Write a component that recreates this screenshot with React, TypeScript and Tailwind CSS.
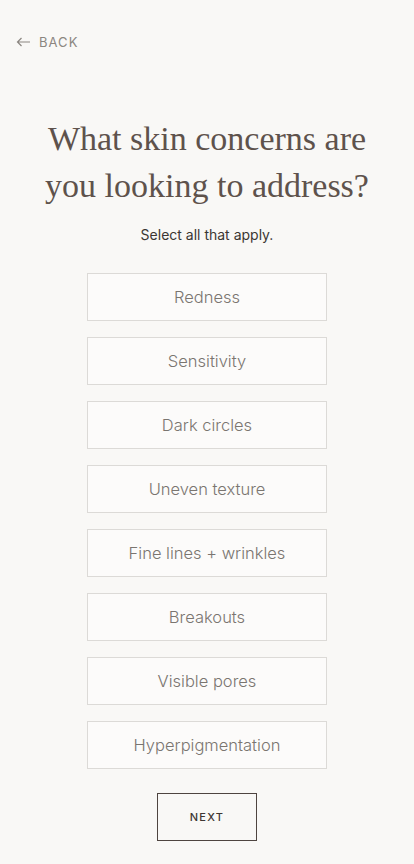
import React from "react";

const options = [
  "Redness",
  "Sensitivity",
  "Dark circles",
  "Uneven texture",
  "Fine lines + wrinkles",
  "Breakouts",
  "Visible pores",
  "Hyperpigmentation",
];

export default function App() {
  return (
    <div className="min-h-[864px] w-full bg-[#f9f8f6] font-['Inter',sans-serif]">
      <div className="flex items-center gap-[8px] pl-[16px] pt-[34px] text-[#8b8680]">
        <svg width="15" height="10" viewBox="0 0 15 10" fill="none" stroke="currentColor" strokeWidth="1.2">
          <path d="M14 5H1.5M5.5 1L1.5 5l4 4" />
        </svg>
        <span className="text-[13px] leading-[16px] tracking-[0.08em]">BACK</span>
      </div>
      <h1 className="mt-[65px] text-center font-['Liberation_Serif',serif] text-[34px] leading-[47px] text-[#5e524c]">
        What skin concerns are
        <br />
        you looking to address?
      </h1>
      <p className="mt-[16px] text-center text-[14px] leading-[20px] text-[#3b3633]">Select all that apply.</p>
      <div className="mt-[28px] flex flex-col items-center gap-[16px]">
        {options.map((o) => (
          <button
            key={o}
            className="flex h-[48px] w-[240px] items-center justify-center border border-[#dcdad7] bg-[#fcfbfa] text-[16.5px] font-light text-[#7a7570]"
          >
            {o}
          </button>
        ))}
      </div>
      <div className="mt-[24px] flex justify-center">
        <button className="flex h-[48px] w-[100px] items-center justify-center border border-[#4e4440] text-[11px] font-medium tracking-[0.12em] text-[#3e3633]">
          NEXT
        </button>
      </div>
    </div>
  );
}
